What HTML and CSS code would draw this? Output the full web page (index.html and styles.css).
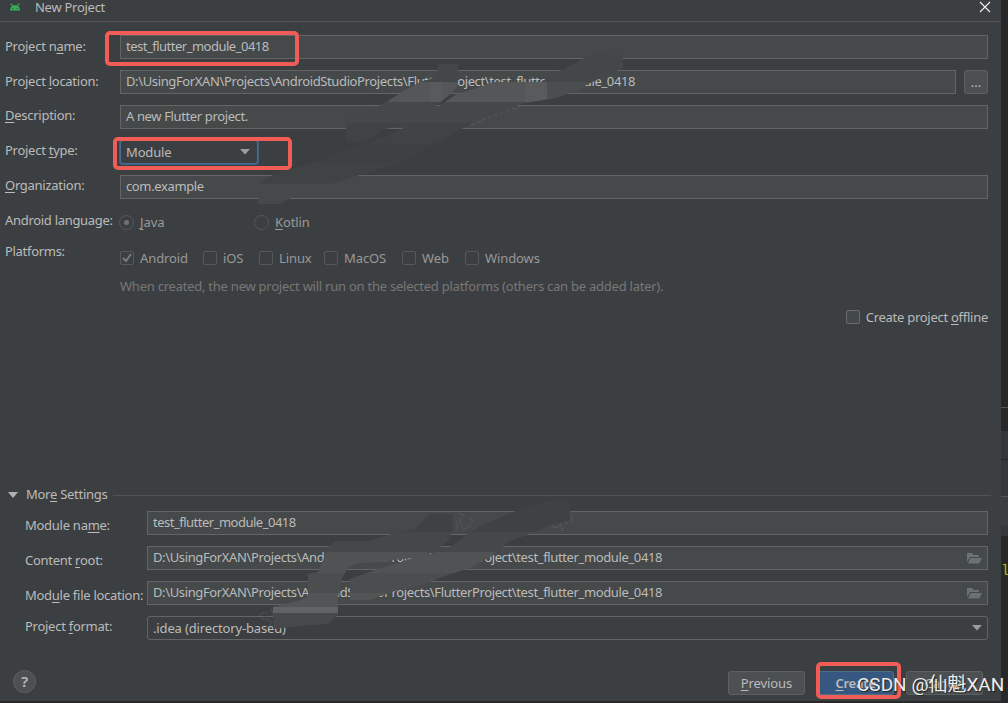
FILE: index.html
```html
<!DOCTYPE html>
<html lang="en">
<head>
    <meta charset="UTF-8">
    <meta name="viewport" content="width=device-width, initial-scale=1.0">
    <title>New Project</title>
    <link rel="stylesheet" href="styles.css">
</head>
<body>
    <div class="dialog">
        <!-- Title bar -->
        <div class="title-bar">
            <svg class="logo" width="12" height="8" viewBox="0 0 12 8">
                <path d="M1 7.400C1 4.600 3 2.200 6 2.200s5 2.400 5 5.200z" fill="#3aab58"/>
                <path d="M1.800 .6l2 2.800M10.200 .6l-2 2.800" stroke="#3aab58" stroke-width="1.200"/>
                <path d="M3.400 5h1.200v1H3.400zM7.400 5h1.200v1H7.400z" fill="#24613a"/>
            </svg>
            <span class="title">New Project</span>
            <svg class="close" width="12" height="12" viewBox="0 0 12 12"><path d="M1 1l10 10M11 1L1 11" stroke="#f0f0f0" stroke-width="1.100"/></svg>
        </div>

        <!-- Project form -->
        <div class="form">
            <div class="row">
                <label>Project n<u>a</u>me:</label>
                <div class="field name">test_flutter_module_0418</div>
            </div>
            <div class="row">
                <label>Project <u>l</u>ocation:</label>
                <div class="field">D:\UsingForXAN\Projects\AndroidStudioProjects\FlutterProject\test_flutter_module_0418</div>
                <div class="browse">...</div>
            </div>
            <div class="row">
                <label class="up"><u>D</u>escription:</label>
                <div class="field">A new Flutter project.</div>
            </div>
            <div class="row">
                <label class="up">Project <u>t</u>ype:</label>
                <div class="select focused">Module
                    <svg width="10" height="6" viewBox="0 0 10 6"><path d="M0 0h10L5 5.500z" fill="#9a9da0"/></svg>
                </div>
            </div>
            <div class="row">
                <label class="up"><u>O</u>rganization:</label>
                <div class="field">com.example</div>
            </div>
            <div class="row dim language">
                <label class="up">Android language:</label>
                <span class="radio on"></span><span class="java"><u>J</u>ava</span>
                <span class="radio"></span><span><u>K</u>otlin</span>
            </div>
            <div class="row dim platforms">
                <label>Platforms:</label>
                <div class="checks">
                    <span class="check w-android"><i><svg width="12" height="12" viewBox="0 0 12 12"><path d="M2 6l3 3 5-7" fill="none" stroke="#7b7e80" stroke-width="1.800"/></svg></i>Android</span>
                    <span class="check w-ios"><i></i>iOS</span>
                    <span class="check w-linux"><i></i>Linux</span>
                    <span class="check w-macos"><i></i>MacOS</span>
                    <span class="check w-web"><i></i>Web</span>
                    <span class="check"><i></i>Windows</span>
                </div>
            </div>
            <div class="hint">When created, the new project will run on the selected platforms (others can be added later).</div>
            <div class="offline"><span class="check"><i></i><span>Create project <u>o</u>ffline</span></span></div>
        </div>

        <!-- More settings -->
        <div class="more">
            <div class="more-title">
                <svg width="10" height="6" viewBox="0 0 10 6"><path d="M0 0h10L5 6z" fill="#b0b3b5"/></svg>
                <span>Mor<u>e</u> Settings</span>
                <hr>
            </div>
            <div class="row">
                <label class="down">Module na<u>m</u>e:</label>
                <div class="field name">test_flutter_module_0418</div>
            </div>
            <div class="row">
                <label class="down">Content <u>r</u>oot:</label>
                <div class="field">D:\UsingForXAN\Projects\AndroidStudioProjects\FlutterProject\test_flutter_module_0418
                    <svg width="15" height="12" viewBox="0 0 15 12"><path d="M0 1h5l1.500 2H12v2H3L0 10z" fill="#6b7274"/><path d="M3.600 6H15l-2.700 5.500H.8z" fill="#6b7274"/></svg>
                </div>
            </div>
            <div class="row">
                <label class="down">Mod<u>u</u>le file location:</label>
                <div class="field">D:\UsingForXAN\Projects\AndroidStudioProjects\FlutterProject\test_flutter_module_0418
                    <svg width="15" height="12" viewBox="0 0 15 12"><path d="M0 1h5l1.500 2H12v2H3L0 10z" fill="#6b7274"/><path d="M3.600 6H15l-2.700 5.500H.8z" fill="#6b7274"/></svg>
                </div>
            </div>
            <div class="row">
                <label class="up">Project <u>f</u>ormat:</label>
                <div class="select">.idea (directory-based)
                    <svg width="10" height="6" viewBox="0 0 10 6"><path d="M0 0h10L5 5.500z" fill="#9a9da0"/></svg>
                </div>
            </div>
        </div>

        <!-- Buttons -->
        <div class="footer">
            <span class="help">?</span>
            <span class="button"><u>P</u>revious</span>
            <span class="button primary"><u>C</u>reate</span>
            <span class="button">Cancel</span>
        </div>
    </div>

    <!-- Editor strip behind the dialog -->
    <div class="editor">
        <div class="strip-top"></div>
        <div class="strip-tab"></div>
        <div class="strip-row"></div>
        <div class="strip-bar"></div>
        <div class="code">l</div>
    </div>

    <!-- Brush strokes over the paths -->
    <svg class="smudges" width="1008" height="703" viewBox="0 0 1008 703">
        <defs>
            <clipPath id="top-strokes">
                <path d="M438 64H458V85L452 93L438 104L410 125L384 129L366 141H346V115L375 108L388 101L405 90L420 82L437 77z"/>
                <path d="M623 49V68L606 76L590 83L575 91L555 98L530 102L500 111L478 120L458 131L438 142L397 163L360 175L330 184L300 193L280 204H258V184L264 179L283 171L310 164L340 152L380 139L410 125L436 108L455 95L480 87L493 82H541L560 71L582 59L600 51z"/>
            </clipPath>
            <clipPath id="bottom-strokes">
                <path d="M430 514H453V530L448 541L440 547L428 552V557L393 560L385 562L358 563L348 568L342 578L338 598V615L328 624L300 626L273 629V607L300 600L308 597V574L318 572L324 558L329 546L335 541H370L395 533L415 529z"/>
                <path d="M520 509L545 502L570 500V520L548 526L527 535L510 541L490 557L481 562L470 568L445 576L425 584L395 591L370 600H350V579L375 570L410 559L427 555L450 547L470 532L490 522z"/>
            </clipPath>
        </defs>
        <g class="faint">
            <text x="456" y="531" transform="rotate(-18 456 531)">心</text>
            <text x="262" y="629" transform="rotate(-20 262 629)">Shan</text>
            <text x="468" y="127" transform="rotate(-20 468 127)">tunnu</text>
            <text x="552" y="530" transform="rotate(-20 552 530)">qn</text>
        </g>
        <g clip-path="url(#top-strokes)">
            <path d="M250 40h390v42H250z" fill="#444747"/>
            <path d="M250 82h390v21H250z" fill="#545657"/>
            <path d="M430 82h12v20h-12zM525 82h22v20h-22z" fill="#595a5b"/>
            <path d="M547 82h70v20h-70z" fill="#4b4e4f"/>
            <path d="M250 102h390v21H250z" fill="#454849"/>
            <path d="M250 123h390v20H250z" fill="#404344"/>
            <path d="M250 143h390v20H250z" fill="#3e4142"/>
            <path d="M250 163h390v21H250z" fill="#404344"/>
            <path d="M250 184h390v22H250z" fill="#464949"/>
        </g>
        <g clip-path="url(#bottom-strokes)">
            <path d="M260 498h320v34H260z" fill="#3f4243"/>
            <path d="M260 532h320v20H260z" fill="#454849"/>
            <path d="M260 552h320v21H260z" fill="#505253"/>
            <path d="M260 573h320v20H260z" fill="#4b4e4f"/>
            <path d="M260 593h320v14H260z" fill="#525455"/>
            <path d="M260 607h320v6H260z" fill="#606263"/>
            <path d="M260 613h320v18H260z" fill="#464849"/>
        </g>
    </svg>

    <div class="mark mark-name"></div>
    <div class="mark mark-type"></div>
    <div class="mark mark-create"></div>
    <div class="watermark">CSDN @仙魁XAN</div>
</body>
</html>
```

FILE: styles.css
```css
body {
    margin: 0;
    width: 1008px;
    height: 703px;
    overflow: hidden;
    position: relative;
    display: flex;
    background: #282828;
    color: #bbbbbb;
    font-family: "Noto Sans", "Open Sans", sans-serif;
    font-size: 13px;
    line-height: 16px;
    letter-spacing: -0.27px;
}

* {
    box-sizing: border-box;
}

u {
    text-underline-offset: 2px;
    text-decoration-thickness: 1px;
}

svg {
    display: block;
}

.dialog {
    width: 1001px;
    height: 701px;
    background: #3c3f41;
    display: flex;
    flex-direction: column;
}

/* Title bar */
.title-bar {
    height: 22px;
    padding: 0 10px 8px 9px;
    border-bottom: 1px solid #515355;
    display: flex;
    align-items: center;
}

.title {
    margin-left: 14px;
}

.close {
    margin-left: auto;
}

/* Form rows */
.form {
    height: 463px;
    padding: 13px 13px 0 5px;
}

.row {
    display: flex;
    align-items: center;
    height: 24px;
    margin-bottom: 11px;
    white-space: nowrap;
}

label {
    width: 115px;
    flex-shrink: 0;
    padding-bottom: 2px;
    color: #bbbbbb;
}

.up {
    padding-bottom: 4px;
}

.down {
    padding-top: 5px;
}

.field,
.select {
    flex: 1;
    height: 24px;
    padding: 0 5px 2px;
    border: 1px solid #646464;
    background: #45494a;
    letter-spacing: -0.37px;
    display: flex;
    align-items: center;
    justify-content: space-between;
}

.field svg {
    margin-top: 2px;
}

.name {
    letter-spacing: -0.5px;
}

.select {
    background: #3c3f41;
    border-radius: 3px;
    padding-bottom: 0;
    letter-spacing: -0.15px;
}

.focused {
    flex: none;
    width: 138px;
    border-color: #466d94;
    box-shadow: 0 0 0 1px #3d6185;
    padding-right: 7px;
}

.browse {
    width: 24px;
    height: 24px;
    margin-left: 8px;
    border: 1px solid #5e6060;
    border-radius: 3px;
    background: #4c5052;
    letter-spacing: 0;
    text-align: center;
    line-height: 23px;
}

.dim {
    color: #999999;
    letter-spacing: -0.1px;
}

.dim label {
    letter-spacing: -0.3px;
}

/* Radios and checkboxes */
.radio {
    width: 15px;
    height: 15px;
    margin: 1px 6px 0 -1px;
    border: 1px solid #55585a;
    border-radius: 50%;
    display: flex;
    align-items: center;
    justify-content: center;
}

.on::before {
    content: "";
    width: 5px;
    height: 5px;
    border-radius: 50%;
    background: #707375;
}

.java {
    width: 115px;
}

.language {
    margin-bottom: 6px;
}

.checks {
    display: flex;
    padding-top: 11px;
}

.check {
    display: flex;
    align-items: center;
}

.check i {
    width: 14px;
    height: 14px;
    margin-right: 6px;
    border: 1px solid #55585a;
    border-radius: 2px;
}

.w-android {
    width: 83px;
}

.w-ios {
    width: 56px;
}

.w-linux {
    width: 65px;
}

.w-macos {
    width: 78px;
}

.w-web {
    width: 63px;
}

.hint {
    padding: 3px 0 0 115px;
    color: #777777;
    letter-spacing: -0.24px;
}

.offline {
    display: flex;
    justify-content: flex-end;
    margin-top: 15px;
}

.offline i {
    border-color: #6b6b6b;
    background: #43494a;
}

/* More settings */
.more {
    padding: 0 13px 0 25px;
}

.more-title {
    display: flex;
    align-items: center;
    height: 20px;
    margin: 0 -3px 6px -17px;
}

.more-title span {
    margin: 0 6px 0 8px;
    padding-bottom: 2px;
}

.more-title hr {
    flex: 1;
    margin: 0;
    border: 0;
    border-top: 1px solid #515355;
}

.more label {
    width: 122px;
}

/* Buttons */
.footer {
    display: flex;
    align-items: center;
    gap: 12px;
    padding: 19px 18px 0 13px;
}

.help {
    width: 23px;
    height: 23px;
    margin: 0 auto 2px 0;
    border: 1px solid #5e6060;
    border-radius: 50%;
    background: #4c5052;
    text-align: center;
    font-size: 15px;
    font-weight: 600;
    line-height: 21px;
}

.button {
    width: 77px;
    height: 24px;
    border: 1px solid #5e6060;
    border-radius: 3px;
    background: #4c5052;
    letter-spacing: -0.1px;
    text-align: center;
    line-height: 22px;
}

.primary {
    background: #365880;
    border-color: #4c708c;
    font-weight: 600;
    letter-spacing: -0.3px;
}

/* Editor strip */
.editor {
    width: 7px;
    overflow: hidden;
    display: flex;
    flex-direction: column;
}

.strip-top {
    height: 408px;
    border-bottom: 1px solid #555555;
}

.strip-tab {
    margin-top: 23px;
    height: 29px;
    background: #343637;
    border-bottom: 1px solid #242424;
}

.strip-row {
    height: 37px;
    background: #353738;
    border-bottom: 1px solid #555555;
}

.strip-bar {
    height: 39px;
    background: #3b3e40;
    border-bottom: 10px solid #353738;
}

.code {
    margin-top: 27px;
    color: #a5c900;
    font-family: "Liberation Mono", monospace;
    font-size: 14px;
}

/* Overlays */
.smudges {
    position: absolute;
    left: 0;
    top: 0;
}

.faint {
    fill: #ffffff;
    fill-opacity: 0.06;
    font-family: "Noto Sans CJK SC", sans-serif;
    font-size: 21px;
}

.mark {
    position: absolute;
    border: 4px solid #f25c57;
    border-radius: 5px;
}

.mark-name {
    left: 105px;
    top: 31px;
    width: 194px;
    height: 35px;
}

.mark-type {
    left: 113px;
    top: 137px;
    width: 179px;
    height: 33px;
}

.mark-create {
    left: 816px;
    top: 662px;
    width: 85px;
    height: 37px;
}

.watermark {
    position: absolute;
    left: 857px;
    top: 672px;
    color: #eeeeee;
    font-family: Roboto, "Noto Sans CJK SC", sans-serif;
    font-size: 19px;
    letter-spacing: 0;
    line-height: 26px;
    white-space: nowrap;
    text-shadow: 1px 1px 1px #222222;
}
```
